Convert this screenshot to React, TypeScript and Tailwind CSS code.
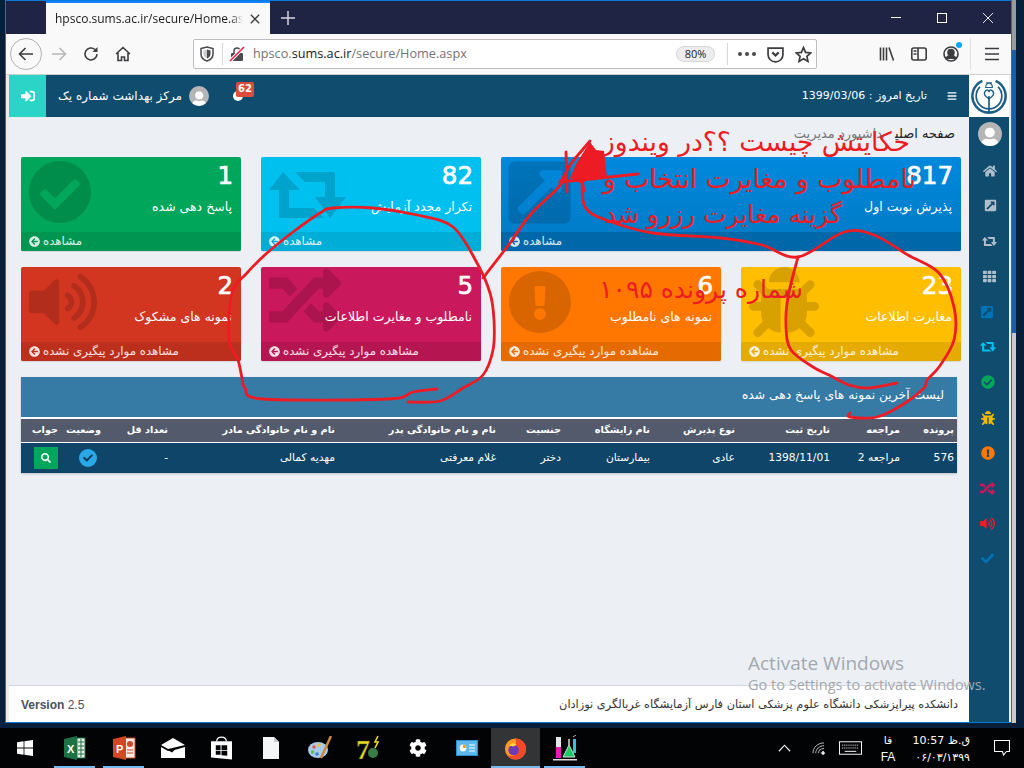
import React from "react";
import {
  FaCheckCircle, FaExternalLinkSquareAlt, FaVolumeUp, FaRandom, FaExclamationCircle, FaBug,
  FaHome, FaTh, FaCheck, FaArrowCircleLeft, FaSignInAlt, FaBars, FaSearch, FaUser, FaCog,
} from "react-icons/fa";

function RetweetIcon({ className }: { className?: string }) {
  return (
    <svg viewBox="0 0 77 46" fill="currentColor" width="1em" height="0.6em" className={className}>
      <path d="M14 0 31 18H20V36H45L55 46H12Q10 46 10 44V18H0Z" />
      <path d="M26 0H64Q66 0 66 2V25H77L61 46 46 25H56V10H36Z" />
    </svg>
  );
}

type Card = { n: string; label: string; foot: string; bg: string; fb: string; Icon: any; ic: string; span?: string };

const VIEW = "مشاهده";
const NOT = "مشاهده موارد پیگیری نشده";
const cards: Card[] = [
  { n: "1", label: "پاسخ دهی شده", foot: VIEW, bg: "bg-[#00a65a]", fb: "bg-[#009551]", Icon: FaCheckCircle, ic: "text-[64px] left-[7px] top-[3px]" },
  { n: "82", label: "تکرار مجدد آزمایش", foot: VIEW, bg: "bg-[#00c0ef]", fb: "bg-[#00add7]", Icon: RetweetIcon, ic: "text-[77px] left-[8px] top-[15px]" },
  { n: "817", label: "پذیرش نوبت اول", foot: VIEW, bg: "bg-gradient-to-b from-[#0089dd] to-[#0079c4]", fb: "bg-[#0068a8]", Icon: FaExternalLinkSquareAlt, ic: "text-[71px] left-[3px] top-[0px]", span: "col-span-2" },
  { n: "2", label: "نمونه های مشکوک", foot: NOT, bg: "bg-[#d23520]", fb: "bg-[#bc2f1c]", Icon: FaVolumeUp, ic: "text-[68px] left-[8px] top-[1px]" },
  { n: "5", label: "نامطلوب و مغایرت اطلاعات", foot: NOT, bg: "bg-[#c9185b]", fb: "bg-[#b51652]", Icon: FaRandom, ic: "text-[72px] left-[8px] top-[-3px]" },
  { n: "6", label: "نمونه های نامطلوب", foot: NOT, bg: "bg-[#ff7701]", fb: "bg-[#e56b01]", Icon: FaExclamationCircle, ic: "text-[64px] left-[7px] top-[3px]" },
  { n: "23", label: "مغایرت اطلاعات", foot: NOT, bg: "bg-[#ffbe00]", fb: "bg-[#e5ab00]", Icon: FaBug, ic: "text-[70px] left-[8px] top-[0px]" },
];

const cols = "grid grid-cols-[54px_70px_95px_85px_89px_65px_161px_167px_67px_43px_1fr]";
const heads = ["پرونده", "مراجعه", "تاریخ ثبت", "نوع پذیرش", "نام زایشگاه", "جنسیت", "نام و نام خانوادگی پدر", "نام و نام خانوادگی مادر", "تعداد قل", "وضعیت", "جواب"];
const row = ["576", "مراجعه 2", "1398/11/01", "عادی", "بیمارستان", "دختر", "غلام معرفتی", "مهدیه کمالی", "-"];

const side: [any, string, string][] = [
  [FaHome, "text-[#aebfcb]", "pl-[2px] text-[14px]"],
  [FaExternalLinkSquareAlt, "text-[#aebfcb]", "pl-[2px] text-[13px]"],
  [RetweetIcon, "text-[#aebfcb]", "pl-[1px] text-[15px]"],
  [FaTh, "text-[#aebfcb]", "pl-[1px] text-[13px]"],
  [FaExternalLinkSquareAlt, "text-[#0073b7]", "pr-[4px] text-[14px]"],
  [RetweetIcon, "text-[#00c0ef]", "pr-[3px] text-[16px]"],
  [FaCheckCircle, "text-[#00a65a]", "pr-[3px] text-[14px]"],
  [FaBug, "text-[#f5b800]", "pr-[3px] text-[14px]"],
  [FaExclamationCircle, "text-[#ff7701]", "pr-[3px] text-[14px]"],
  [FaRandom, "text-[#c9185b]", "pr-[3px] text-[15px]"],
  [FaVolumeUp, "text-[#ee1c25]", "pr-[3px] text-[15px]"],
  [FaCheck, "text-[#0073b7]", "pr-[3px] text-[13px]"],
];

function Avatar({ size }: { size: string }) {
  return (
    <span className={`${size} rounded-full bg-[#b5b5b5] overflow-hidden flex justify-center items-end shrink-0`}>
      <FaUser className="text-white w-[82%] h-[82%] translate-y-[8%]" />
    </span>
  );
}

function Logo() {
  return (
    <svg viewBox="0 0 40 40" className="w-[38px] h-[38px]" fill="none" stroke="#1b5e86">
      <path d="M13 4A17.500 17.500 0 1 0 27 4" strokeWidth="2.600" />
      <path d="M10.500 10.500A13.500 13.500 0 1 0 29.500 10.500" strokeWidth="1.800" />
      <path d="M20 37V20" strokeWidth="1.800" />
      <path d="M20 23c-4.500-2.500-6-5.500-4-8s4-1 4 1c0-2 2-3.500 4-1s.5 5.500-4 8z" strokeWidth="1.500" />
      <path d="M16.500 11c0-6 7-6 7 0zM17 6h6" strokeWidth="1.200" />
      <path d="M15 37h10" strokeWidth="1.600" />
    </svg>
  );
}

function Tb() {
  const item = "w-[49px] h-full flex items-center justify-center relative";
  const bar = <span className="absolute bottom-0 left-[4px] right-[4px] h-[2px] bg-[#76b9ed]" />;
  return (
    <footer className="h-[40px] bg-[#020305] flex items-center text-white font-['Liberation_Sans',sans-serif] shrink-0">
      <div className="w-[48px] h-full flex items-center justify-center pl-[1px]">
        <svg viewBox="0 0 16 16" className="w-[16px] h-[16px]" fill="#fff"><path d="M0 2.200 6.600 1.300v6.300H0zM7.400 1.200 16 0v7.600H7.400zM0 8.400h6.600v6.300L0 13.800zM7.400 8.400H16V16l-8.600-1.200z" /></svg>
      </div>
      <div className="w-[2px]" />
      <div className={item}>
        <svg viewBox="0 0 24 24" className="w-[24px] h-[24px]"><path d="M14 2h8v20h-8z" fill="#e8f0ea" stroke="#1e7145" strokeWidth="1" /><path d="M15 6h6M15 10h6M15 14h6M15 18h6M18 3v18" stroke="#1e7145" strokeWidth="1" /><path d="M1 3 14 0v24L1 21z" fill="#1e7145" /><text x="4" y="16.500" fontSize="11" fontWeight="700" fill="#fff" fontFamily="Liberation Sans">X</text></svg>
        {bar}
      </div>
      <div className={item}>
        <svg viewBox="0 0 24 24" className="w-[24px] h-[24px]"><path d="M13 2h10v20H13z" fill="#fbe9e3" stroke="#d24726" strokeWidth="1" /><circle cx="18" cy="8" r="3" fill="#d24726" /><path d="M15 14h6M15 17h6" stroke="#d24726" /><path d="M1 3 14 0v24L1 21z" fill="#d24726" /><text x="4" y="16.500" fontSize="11" fontWeight="700" fill="#fff" fontFamily="Liberation Sans">P</text></svg>
        {bar}
      </div>
      <div className={item}>
        <svg viewBox="0 0 24 20" className="w-[24px] h-[20px]" fill="#fff"><path d="M0 7 12 0l12 7L7 11 0 7zM0 9l7 4 1-.3 3 1.700 2.500-2.500L24 9v11H0z" /></svg>
      </div>
      <div className={item}>
        <svg viewBox="0 0 22 24" className="w-[21px] h-[24px]" fill="#fff"><path d="M0 5h22v19L0 22z" /><path d="M6 5c0-6 10-6 10 0" fill="none" stroke="#fff" strokeWidth="1.300" /><path d="M5 9h5v5H5zM11 9h6v5h-6zM5 15h5v4H5zM11 15h6v5l-6-.5z" fill="#020305" /></svg>
      </div>
      <div className={item}>
        <svg viewBox="0 0 16 22" className="w-[16px] h-[22px]"><path d="M0 0h11l5 5v17H0z" fill="#f4f6f8" /><path d="M11 0l5 5h-5z" fill="#c8ccd0" /></svg>
      </div>
      <div className={item}>
        <svg viewBox="0 0 24 24" className="w-[24px] h-[24px]"><ellipse cx="10" cy="14" rx="10" ry="8" fill="#a9cde8" /><circle cx="6" cy="11" r="1.800" fill="#e85a4f" /><circle cx="11" cy="9" r="1.800" fill="#f2c230" /><circle cx="4.500" cy="16" r="1.800" fill="#5bb85b" /><circle cx="9" cy="18" r="1.800" fill="#3f7fd0" /><path d="M23 0 13 22" stroke="#c98a3c" strokeWidth="2.500" /></svg>
      </div>
      <div className={item}>
        <svg viewBox="0 0 26 26" className="w-[26px] h-[26px]"><text x="0" y="24" fontSize="28" fontWeight="700" fill="#ede017" stroke="#333" strokeWidth=".5" fontFamily="Liberation Serif">7</text><circle cx="17" cy="18" r="5" fill="#3a7d44" /><path d="M22 1l-3 6h3l-3 6" stroke="#ede017" strokeWidth="1.600" fill="none" /></svg>
      </div>
      <div className={item}><FaCog className="text-white text-[18px]" /></div>
      <div className={item}>
        <svg viewBox="0 0 22 16" className="w-[22px] h-[16px]"><rect width="22" height="16" fill="#2a8fd0" /><rect x="1" y="1" width="20" height="14" fill="#5fb7ea" /><circle cx="7" cy="8" r="3.400" fill="#fff" /><path d="M7 8V4.600A3.400 3.400 0 0 1 10.400 8z" fill="#f2a31d" /><path d="M13 5h6M13 8h6M13 11h6" stroke="#fff" /></svg>
      </div>
      <div className={`${item} bg-[#333436]`}>
        <svg viewBox="0 0 24 24" className="w-[23px] h-[23px]">
          <circle cx="12" cy="12.500" r="11" fill="#ff9a1f" />
          <path d="M12 1.500c6 0 11 5 11 11s-5 11-11 11c-4 0-7-2-9-5 3 2 8 2 10-1 2-2 1-5-1-6 0-4 1-7 0-10z" fill="#f2492b" />
          <circle cx="10" cy="13.500" r="5.500" fill="#6b3bb8" />
          <path d="M6 9c2-3 5-3 7-1l-3 2z" fill="#ffd447" />
        </svg>
        <span className="absolute bottom-0 left-0 right-0 h-[2px] bg-[#76b9ed]" />
      </div>
      <div className={item}>
        <svg viewBox="0 0 24 26" className="w-[24px] h-[26px]"><path d="M3 2h5v18H3z" fill="#e6e6e6" /><path d="M3 12h5v11H3z" fill="#e81cb0" /><path d="M0 24h24v1.500H0z" fill="#ddd" /><path d="M16 4v6l-6 12h12l-6-12z" fill="#18c964" stroke="#ddd" /><path d="M20 4v14h3V4z" fill="#2ec5d8" /><path d="M20 2l3-2" stroke="#bbb" /></svg>
        {bar}
      </div>
      <div className="ml-auto flex items-center h-full pr-[14px]">
        <div className="w-[32px] flex justify-center">
          <svg viewBox="0 0 14 8" className="w-[13px] h-[8px]" fill="none" stroke="#fff" strokeWidth="1.200"><path d="M1 7.500 7 1l6 6.500" /></svg>
        </div>
        <div className="w-[36px] flex justify-center">
          <svg viewBox="0 0 14 14" className="w-[13px] h-[13px]" fill="none" stroke="#ccc" strokeWidth="1"><path d="M1 12C1 6 6 1 13 1M4 12c0-4 4-8 9-8M7 12c0-3 2-5 6-5M10 12c0-1 1-2 3-2" /><circle cx="12" cy="12" r="1.400" fill="#fff" /></svg>
        </div>
        <div className="w-[28px] flex justify-center">
          <svg viewBox="0 0 24 14" className="w-[23px] h-[14px]" fill="none" stroke="#fff"><rect x=".5" y=".5" width="23" height="13" /><path d="M3 4h18M3 7h18" strokeDasharray="1 1" /><path d="M6 10.500h12" /></svg>
        </div>
        <div dir="rtl" className="w-[46px] pl-[2px] flex flex-col items-center text-[11px] leading-[17px] font-['DejaVu_Sans',sans-serif] pt-[2px]">
          <span>فا</span>
          <span dir="ltr" className="font-['Liberation_Sans',sans-serif] text-[12px]">FA</span>
        </div>
        <div className="w-[60px] flex flex-col items-end text-[12px] leading-[17px] font-['DejaVu_Sans',sans-serif] pt-[2px] whitespace-nowrap">
          <span dir="rtl" className="text-[11px]">ق.ظ 10:57</span>
          <span dir="ltr" className="text-[11px]">۰۶/۰۳/۱۳۹۹</span>
        </div>
        <div className="w-[40px] flex justify-end">
          <svg viewBox="0 0 16 16" className="w-[16px] h-[16px]" fill="none" stroke="#fff" strokeWidth="1.100"><path d="M.5.500h15v11h-3l-3 3.500-1-3.500H.5z" /></svg>
        </div>
      </div>
    </footer>
  );
}

function Toolbar() {
  const btn = "w-[32px] h-[32px] flex items-center justify-center shrink-0";
  const s = { fill: "none", stroke: "#3d3d40", strokeWidth: 1.6 } as const;
  return (
    <div className="h-[41px] bg-[#f9f9fa] border-b border-[#cfcfd0] flex items-center pl-[4px] shrink-0">
      <div className={`${btn} rounded-full border border-[#b1b1b3] bg-[#f9f9fa]`}>
        <svg viewBox="0 0 16 16" className="w-[16px] h-[16px]" {...s}><path d="M15 8H1.500M7.500 2 1.500 8l6 6" /></svg>
      </div>
      <div className={`${btn} ml-[1px]`}>
        <svg viewBox="0 0 16 16" className="w-[16px] h-[16px]" fill="none" stroke="#b8b8ba" strokeWidth="1.600"><path d="M1 8h13.500M8.500 2l6 6-6 6" /></svg>
      </div>
      <div className={btn}>
        <svg viewBox="0 0 16 16" className="w-[16px] h-[16px]" {...s}><path d="M14 8a6 6 0 1 1-2-4.500L14 5" /><path d="M14.500 1v5h-5z" fill="#3d3d40" stroke="none" /></svg>
      </div>
      <div className={btn}>
        <svg viewBox="0 0 16 16" className="w-[16px] h-[16px]" {...s}><path d="M1 8l7-6.500L15 8M3 7v7.500h3.500V11h3v3.500H13V7" /></svg>
      </div>
      <div className="ml-[54px] w-[624px] h-[30px] bg-white border border-[#bdbdbd] rounded-[2px] flex items-center pl-[5px] pr-[4px] shrink-0">
        <svg viewBox="0 0 16 16" className="w-[16px] h-[16px] shrink-0"><path d="M2 2.500 8 1l6 1.500V8c0 3.500-3 6-6 7-3-1-6-3.500-6-7z" fill="none" stroke="#4a4a4f" strokeWidth="1.500" /><path d="M8 3.500 11.500 4.500V8c0 2-1.500 3.500-3.500 4.500z" fill="#4a4a4f" /><path d="M8 3.500 4.500 4.500V8c0 2 1.500 3.500 3.500 4.500z" fill="#9a9a9e" opacity=".5" /></svg>
        <span className="w-px h-[22px] bg-[#d7d7db] ml-[7px]" />
        <svg viewBox="0 0 16 16" className="w-[16px] h-[16px] ml-[6px] shrink-0"><rect x="2" y="7" width="12" height="8" rx="1" fill="#4a4a4f" /><path d="M5 7V5a3 3 0 0 1 6 0v2" fill="none" stroke="#4a4a4f" strokeWidth="1.500" /><path d="M1 15 15 1" stroke="#f9f9fa" strokeWidth="3.500" /><path d="M1 15 15 1" stroke="#e22850" strokeWidth="1.600" /></svg>
        <span className="ml-[8px] text-[12.700px] text-[#737373] font-['Open_Sans',sans-serif] whitespace-nowrap">
          hpsco.<span className="text-[#1a1a1a]">sums.ac.ir</span>/secure/Home.aspx
        </span>
        <span className="ml-auto w-[39px] h-[16px] rounded-full bg-[#ededf0] border border-[#d7d7db] text-[11px] leading-[14px] text-center text-[#222] font-['Open_Sans',sans-serif]">80%</span>
        <span className="w-px h-[22px] bg-[#d7d7db] ml-[12px]" />
        <svg viewBox="0 0 20 20" className="w-[20px] h-[20px] ml-[9px]" fill="#4a4a4f"><circle cx="3" cy="10" r="2" /><circle cx="10" cy="10" r="2" /><circle cx="17" cy="10" r="2" /></svg>
        <svg viewBox="0 0 16 16" className="w-[17px] h-[17px] ml-[10px]" {...s}><path d="M1 2h14v6a7 7 0 0 1-14 0z" /><path d="M5 6l3 3 3-3" strokeWidth="2" /></svg>
        <svg viewBox="0 0 16 16" className="w-[17px] h-[17px] ml-[11px]" {...s}><path d="M8 1.500 10 6l4.800.5-3.600 3.200 1 4.800L8 12l-4.200 2.500 1-4.800L1.200 6.500 6 6z" /></svg>
      </div>
      <div className={`${btn} ml-[54px]`}>
        <svg viewBox="0 0 16 16" className="w-[16px] h-[16px]" {...s}><path d="M1.500 1.500v13M4.500 1.500v13M7.500 1.500v13M10 1.500l4.500 13" /></svg>
      </div>
      <div className={btn}>
        <svg viewBox="0 0 16 16" className="w-[16px] h-[16px]" {...s}><rect x=".8" y="2" width="14.400" height="12" rx="2" /><path d="M7 2v12M2.500 5H5.500M2.500 8H5.500" /></svg>
      </div>
      <div className={`${btn} relative`}>
        <svg viewBox="0 0 16 16" className="w-[16px] h-[16px]" {...s}><circle cx="8" cy="8" r="7" /><circle cx="8" cy="6.500" r="3" fill="#3d3d40" /><path d="M3 13c1-3 3-3.500 5-3.500s4 .5 5 3.500" fill="#3d3d40" /></svg>
        <span className="absolute top-[4px] right-[5px] w-[6px] h-[6px] rounded-full bg-[#0aa5ff]" />
      </div>
      <span className="w-px h-[32px] bg-[#e0e0e2] ml-[3px]" />
      <div className={`${btn} ml-[5px]`}>
        <svg viewBox="0 0 16 16" className="w-[16px] h-[16px]" {...s}><path d="M1 2.500h14M1 8h14M1 13.500h14" /></svg>
      </div>
    </div>
  );
}

function Card({ c }: { c: Card }) {
  return (
    <div className={`${c.bg} ${c.span ?? ""} h-[94px] rounded-[2px] relative overflow-hidden flex flex-col text-white shadow-[0_1px_1px_rgba(0,0,0,0.1)]`}>
      <c.Icon className={`absolute ${c.ic} text-black/15`} />
      <div dir="rtl" className="relative flex-1 pr-[9px] pt-[1px] flex flex-col">
        <span className="text-[24.500px] leading-[36px] mr-[-1px] [-webkit-text-stroke:0.7px_white]">{c.n}</span>
        <span className="text-[12.500px] leading-[18px] mt-[4px] whitespace-nowrap">{c.label}</span>
      </div>
      <div className={`${c.fb} relative h-[19px] flex items-center pl-[8px] gap-[3px] text-[11.800px] text-white/85`}>
        <FaArrowCircleLeft className="text-[11px]" />
        <span dir="rtl" className="whitespace-nowrap">{c.foot}</span>
      </div>
    </div>
  );
}

const smooth = (pts: number[][]) => {
  let d = `M${pts[0][0]} ${pts[0][1]}`;
  for (let i = 0; i < pts.length - 1; i++) {
    const a = pts[Math.max(i - 1, 0)], b = pts[i], c = pts[i + 1], e = pts[Math.min(i + 2, pts.length - 1)];
    d += ` C${b[0] + (c[0] - a[0]) / 6} ${b[1] + (c[1] - a[1]) / 6} ${c[0] - (e[0] - b[0]) / 6} ${c[1] - (e[1] - b[1]) / 6} ${c[0]} ${c[1]}`;
  }
  return d;
};

function Scribbles() {
  const p = { fill: "none", stroke: "#ed1c24", strokeWidth: 2.8, strokeLinejoin: "round", strokeLinecap: "round" } as const;
  return (
    <svg viewBox="0 0 1024 768" className="absolute inset-0 w-[1024px] h-[768px] pointer-events-none">
      <path {...p} d={smooth([[437,389],[413,392],[387,399],[263,399],[245,388],[242,378],[238,360],[229,340],[232,293],[247,273],[267,253],[293,232],[320,213],[333,208],[373,208],[417,215],[453,227],[477,263],[490,293],[494,320],[493,350],[483,375],[463,388],[440,401],[408,402]])} />
      <path {...p} d={smooth([[483,278],[510,243],[530,215],[556,190],[565,178]])} />
      <path fill="#ed1c24" d="M570 178 576 164 590 142 596 150 604 151 607 178 590 178 582 184z" />
      <path {...p} d="M560 183 572 162 590 141M566 152 567 192M560 182 600 178 638 174M582 180 584 191" />
      <path {...p} d={smooth([[582,180],[585,207],[606,220],[653,233],[721,238],[762,245],[798,257],[844,232],[874,235],[908,255],[939,273],[954,307],[954,340],[939,367],[927,380],[924,388],[902,405],[877,417],[850,417],[850,413]])} />
      <path {...p} d={smooth([[798,257],[788,297],[786,327],[791,350],[813,367],[829,375],[849,385],[869,388],[897,383]])} />
    </svg>
  );
}

export default function App() {
  const ar = "font-['DejaVu_Sans',sans-serif]";
  return (
    <div className={`w-[1024px] h-[768px] bg-[#071f38] relative overflow-hidden flex flex-col ${ar}`}>
      <div className="h-[728px] flex shrink-0">
        <div className="w-[5px] shrink-0" />
        <div className="w-[1007px] h-[723px] border border-[#0a78d7] flex flex-col shrink-0">
          <div className="h-[33px] bg-[#1f2344] flex items-stretch shrink-0 pl-[40px]">
            <div className="w-[224px] bg-[#f9f9fa] border-t-[2px] border-[#0a84ff] flex items-center pl-[9px] pr-[10px]">
              <span className="w-[188px] overflow-hidden whitespace-nowrap text-[12px] text-[#1a1a1a] font-['Open_Sans',sans-serif] [mask-image:linear-gradient(to_left,transparent,black_12px)]">hpsco.sums.ac.ir/secure/Home.aspx</span>
              <svg viewBox="0 0 12 12" className="w-[10px] h-[10px] ml-auto" stroke="#3d3d40" strokeWidth="1.600"><path d="M1 1l10 10M11 1 1 11" /></svg>
            </div>
            <div className="w-[36px] flex items-center justify-center">
              <svg viewBox="0 0 14 14" className="w-[14px] h-[14px]" stroke="#d7d7db" strokeWidth="1.500"><path d="M7 0v14M0 7h14" /></svg>
            </div>
            <div className="ml-auto flex items-center h-full">
              <div className="w-[46px] flex justify-center"><span className="w-[10px] h-px bg-white" /></div>
              <div className="w-[46px] flex justify-center"><span className="w-[10px] h-[10px] border border-white" /></div>
              <div className="w-[46px] flex justify-center">
                <svg viewBox="0 0 10 10" className="w-[10px] h-[10px]" stroke="#fff" strokeWidth=".9"><path d="M0 0l10 10M10 0 0 10" /></svg>
              </div>
            </div>
          </div>
          <Toolbar />
          <div className="flex-1 min-h-0 flex bg-[#ececec] pl-[3px] pr-[2px]">
            <div className="w-[960px] flex flex-col">
              <header className="h-[42px] bg-[#0f4c6e] flex items-center text-white shrink-0">
                <div className="w-[37px] h-full bg-[#2bd4c6] flex items-center justify-center">
                  <FaSignInAlt className="text-[14px]" />
                </div>
                <span dir="rtl" className="ml-[12px] w-[124px] text-[12px] whitespace-nowrap">مرکز بهداشت شماره یک</span>
                <span className="ml-[7px]"><Avatar size="w-[20px] h-[20px]" /></span>
                <span className="ml-[24px] relative w-[10px] h-[10px] rounded-full bg-white">
                  <span className="absolute left-[3px] top-[-9px] h-[15px] w-[18px] bg-[#dd4b39] rounded-[2px] text-[10px] leading-[14px] font-bold text-center">62</span>
                </span>
                <span dir="rtl" className="ml-auto text-[11px] whitespace-nowrap">تاریخ امروز : 1399/03/06</span>
                <FaBars className="ml-[20px] mr-[12px] text-[10px]" />
              </header>
              <main className="flex-1 min-h-0 bg-[#ecf0f5] pl-[12px] relative">
                <div dir="rtl" className="h-[40px] pr-[14px] pt-[9px] pl-[12px] text-[13px] leading-[16px] whitespace-nowrap text-[#222]">
                  <span>صفحه اصلی</span>
                  <span className="text-[#777] mr-[12px]">داشبورد مدیریت</span>
                </div>
                <div className="w-[940px] grid grid-cols-4 gap-x-[20px] gap-y-[16px]">
                  {cards.map((c) => <Card key={c.n} c={c} />)}
                </div>
                <section className="w-[936px] mt-[16px] bg-white shadow-[0_1px_2px_rgba(0,0,0,0.2)]">
                  <div dir="rtl" className="h-[40px] bg-[#367aa6] text-white text-[12.300px] flex items-center pr-[13px] pb-[4px]">لیست آخرین نمونه های پاسخ دهی شده</div>
                  <div dir="rtl" className={`${cols} mt-[2px] h-[23px] bg-[#535a6b] text-white text-[9.700px] font-bold items-center pr-[3px] pb-[1px] whitespace-nowrap`}>
                    {heads.map((h) => <span key={h}>{h}</span>)}
                  </div>
                  <div dir="rtl" className={`${cols} mt-px h-[30px] bg-[#0f4568] text-white text-[10.700px] items-center pr-[3px] whitespace-nowrap`}>
                    {row.map((h) => <span key={h}>{h}</span>)}
                    <span className="pr-[4px]">
                      <span className="w-[18px] h-[18px] rounded-full bg-[#29a9e8] flex items-center justify-center">
                        <FaCheck className="text-[#0f3a58] text-[10px]" />
                      </span>
                    </span>
                    <span className="pr-0">
                      <span className="w-[24px] h-[22px] bg-[#00a65a] flex items-center justify-center">
                        <FaSearch className="text-white text-[10px]" />
                      </span>
                    </span>
                  </div>
                </section>
              </main>
              <div className="h-[37px] bg-white border-t border-[#d2d6de] flex items-center justify-between pl-[12px] pr-[11px] pt-[1px] shrink-0">
                <span className="text-[12px] font-['Liberation_Sans',sans-serif] font-bold text-[#4a5060]">Version <span className="font-normal">2.5</span></span>
                <span dir="rtl" className="text-[11.350px] text-[#333] whitespace-nowrap">دانشکده پیراپزشکی دانشگاه علوم پزشکی استان فارس آزمایشگاه غربالگری نوزادان</span>
              </div>
            </div>
            <aside className="w-[40px] bg-[#0f4c6e] flex flex-col items-center">
              <div className="w-full h-[42px] bg-white flex items-center justify-center shrink-0"><Logo /></div>
              <div className="mt-[5px] mb-[7px] pl-[1px]"><Avatar size="w-[24px] h-[24px]" /></div>
              {side.map(([I, col, cls], i) => (
                <div key={i} className={`h-[35.300px] w-full flex items-center justify-center shrink-0 ${cls} ${col}`}>
                  <I />
                </div>
              ))}
            </aside>
          </div>
        </div>
        <div className="w-[4px] h-[723px] bg-[#c9c9c9] flex flex-col shrink-0">
          <div className="h-[50px] bg-[#9a9a9a]" />
          <div className="h-[283px] bg-[#1560a8]" />
        </div>
      </div>
      <Tb />

      <div className="absolute left-[748px] top-[650px] text-[#a3a8ae] font-['Open_Sans',sans-serif] whitespace-nowrap pointer-events-none">
        <div className="text-[19px] leading-[26px]">Activate Windows</div>
        <div className="text-[14.500px] leading-[20px] mt-[-1px]">Go to Settings to activate Windows.</div>
      </div>

      <Scribbles />
      <div dir="rtl" className="absolute left-[560px] top-[124px] w-[350px] text-[#ed1c24] text-[26.500px] leading-[36px] whitespace-nowrap pointer-events-none">حکایتش چیست ؟؟در ویندوز</div>
      <div dir="rtl" className="absolute left-[560px] top-[161px] w-[356px] text-[#ed1c24] text-[26.500px] leading-[36px] whitespace-nowrap pointer-events-none">نامطلوب و مغایرت انتخاب و</div>
      <div dir="rtl" className="absolute left-[560px] top-[197px] w-[282px] text-[#ed1c24] text-[25px] leading-[36px] whitespace-nowrap pointer-events-none">گزینه مغایرت رزرو شد</div>
      <div dir="rtl" className="absolute left-[560px] top-[272px] w-[243px] text-[#ed1c24] text-[25px] leading-[36px] whitespace-nowrap pointer-events-none">شماره پرونده ۱۰۹۵</div>
    </div>
  );
}
